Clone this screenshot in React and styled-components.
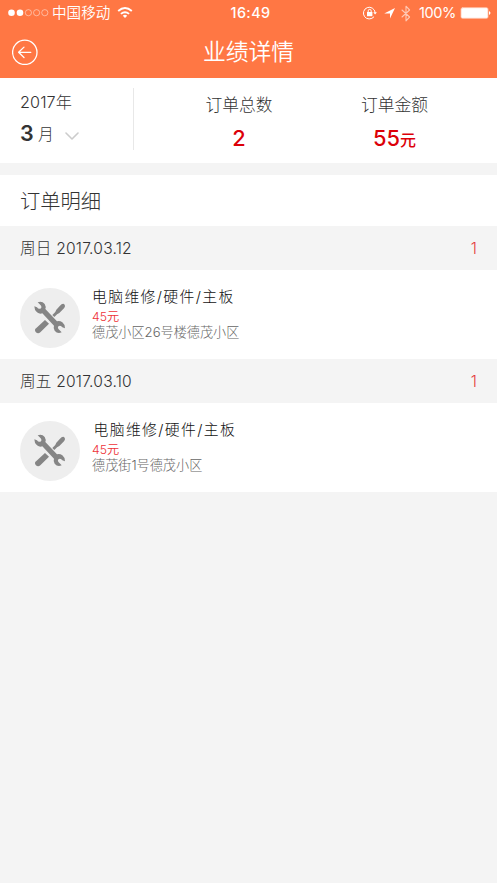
import React from 'react';
import styled, { createGlobalStyle } from 'styled-components';

const GlobalStyle = createGlobalStyle`
  * { box-sizing: border-box; }
  body {
    margin: 0;
    background: #f4f4f4;
    font-family: Inter, "Noto Sans CJK SC", sans-serif;
    font-weight: 300;
    color: #333;
  }
`;

const Screen = styled.main`
  width: 497px;
  min-height: 883px;
  background: #f4f4f4;
  overflow: hidden;
`;

const Header = styled.header`
  height: 78px;
  background: #ff7744;
  color: #fff;
`;

const StatusBar = styled.div`
  display: grid;
  grid-template-columns: 1fr auto 1fr;
  align-items: center;
  height: 26px;
  padding: 0 6px 0 8px;
`;

const StatusGroup = styled.div`
  display: flex;
  align-items: center;
  justify-content: ${(p) => (p.$end ? 'flex-end' : 'flex-start')};
`;

const Signal = styled.svg`
  display: block;
  margin-right: 3px;
`;

const Carrier = styled.span`
  font-size: 14.6px;
  line-height: 26px;
  font-weight: 350;
  margin-right: 7px;
`;

const Clock = styled.span`
  font-size: 14.4px;
  font-weight: 550;
  letter-spacing: 0.4px;
  line-height: 26px;
  margin-left: 2px;
`;

const Percent = styled.span`
  font-size: 14.6px;
  font-weight: 400;
  line-height: 26px;
  letter-spacing: -0.45px;
  margin: 0 4px 0 8px;
`;

const NavBar = styled.nav`
  display: grid;
  grid-template-columns: 60px 1fr 60px;
  height: 52px;
  align-items: center;
`;

const BackButton = styled.button`
  width: 26px;
  height: 26px;
  margin: 0 0 0 12px;
  padding: 0;
  border: 0;
  background: none;
  color: inherit;
`;

const PageTitle = styled.h1`
  margin: 0;
  font-size: 22.8px;
  font-weight: 350;
  line-height: 50px;
  text-align: center;
`;

const Icon = styled.svg`
  display: block;
  flex: none;
  fill: none;
  stroke: currentColor;
  stroke-linecap: round;
  stroke-linejoin: round;
`;

const Summary = styled.section`
  display: flex;
  height: 85px;
  padding-top: 10px;
  background: #fff;
`;

const Period = styled.div`
  width: 134px;
  height: 62px;
  padding-left: 20px;
  border-right: 1px solid #e8e8e8;
`;

const Year = styled.div`
  height: 29px;
  font-size: 16.2px;
  line-height: 28px;
  letter-spacing: 0.1px;
`;

const MonthRow = styled.div`
  display: flex;
  align-items: center;
  height: 34px;
  color: #333;
`;

const MonthNumber = styled.span`
  width: 18px;
  margin-top: -2px;
  font-size: 21.5px;
  font-weight: 600;
`;

const MonthUnit = styled.span`
  width: 27px;
  font-size: 15.8px;
  line-height: 30px;
  padding-top: 2px;
`;

const Chevron = styled(Icon)`
  margin-top: 3px;
  color: #ccc;
`;

const Stat = styled.div`
  width: ${(p) => p.$width}px;
  text-align: center;
`;

const StatLabel = styled.div`
  font-size: 16.8px;
  line-height: 34px;
`;

const StatValue = styled.div`
  font-size: 21.8px;
  line-height: 32px;
  font-weight: 550;
  color: #dc0008;
`;

const Unit = styled.span`
  font-size: 16px;
  font-weight: 500;
`;

const Orders = styled.section`
  margin-top: 12px;
`;

const OrdersTitle = styled.h2`
  height: 51px;
  margin: 0;
  padding: 1px 0 0 20px;
  background: #fff;
  font-size: 20.3px;
  font-weight: 300;
  line-height: 52px;
`;

const DayHeader = styled.div`
  display: flex;
  justify-content: space-between;
  height: 44px;
  padding: 0 20px;
  background: #f4f4f4;
  font-size: 15.6px;
  line-height: 45px;
  letter-spacing: 0.2px;
`;

const DayCount = styled.span`
  color: #e43a3c;
  letter-spacing: 0;
`;

const Order = styled.article`
  display: flex;
  height: 89px;
  padding: 15px 20px 0;
  background: #fff;
`;

const Avatar = styled.div`
  flex: none;
  width: 60px;
  height: 60px;
  margin: 3px 12px 0 0;
  border-radius: 50%;
  background: #eee;
`;

const OrderTitle = styled.h3`
  margin: 0;
  padding-left: ${(p) => p.$indent || 0}px;
  font-size: 14.8px;
  font-weight: 300;
  line-height: 24px;
  letter-spacing: 1.4px;
  color: #111;
`;

const Price = styled.div`
  font-size: 12.2px;
  line-height: 16px;
  font-weight: 350;
  color: #ee3338;
`;

const Address = styled.div`
  font-size: 13.15px;
  line-height: 15px;
  color: #666;
`;

const days = [
  { day: '周日', date: '2017.03.12', address: '德茂小区26号楼德茂小区', indent: 0 },
  { day: '周五', date: '2017.03.10', address: '德茂街1号德茂小区', indent: 1.5 },
];

function ToolsIcon() {
  return (
    <Icon width="60" height="60" viewBox="0 0 60 60" stroke="none">
      <g transform="translate(10 10) scale(.3333)" fill="#858585" stroke="none">
        <path d="M23 13Q36 8 44 18Q49 26 46 33L81 70Q89 67 97 73Q105 79 105 91L97 88Q93 82 87 84Q81 87 86 94L95 103Q82 108 74 98Q69 90 72 83L37 46Q29 49 21 43Q13 37 13 25L21 28Q25 34 31 32Q37 29 32 22Z" />
        <path d="M90 23Q96 16 102 18Q108 23 102 31L88 45Q82 47 73 57L67 51Q78 42 79 35Z" />
        <path d="M45 66 57 77 31 103Q24 109 17 102Q12 95 19 90Z" />
      </g>
    </Icon>
  );
}

export default function App() {
  return (
    <>
      <GlobalStyle />
      <Screen>
        <Header>
          <StatusBar>
            <StatusGroup>
              <Signal width="41" height="10" viewBox="0 0 41 10">
                <g fill="#fff">
                  <circle cx="3.5" cy="4.7" r="3.3" />
                  <circle cx="12" cy="4.7" r="3.3" />
                </g>
                <g fill="none" stroke="#fff" strokeOpacity=".65" strokeWidth=".7">
                  <circle cx="20.4" cy="4.7" r="3.1" />
                  <circle cx="28.6" cy="4.7" r="3.1" />
                  <circle cx="36.8" cy="4.7" r="3.1" />
                </g>
              </Signal>
              <Carrier>中国移动</Carrier>
              <Icon width="16" height="12" viewBox="0 0 16 12" strokeWidth="1.9">
                <path d="M1.2 4Q8-1.8 14.8 4M3.9 6.9Q8 3.4 12.1 6.9" strokeLinecap="butt" />
                <path d="M5.8 8.7Q8 7 10.2 8.7L8 11Z" fill="currentColor" stroke="none" />
              </Icon>
            </StatusGroup>
            <Clock>16:49</Clock>
            <StatusGroup $end>
              <Icon width="14" height="14" viewBox="0 0 14 14" strokeWidth="1">
                <path d="M10.8 11A5.9 5.9 0 1 1 12.2 6.4" />
                <path d="M10.3 6.2h3.6l-1.8 2.2Z" fill="currentColor" stroke="none" />
                <rect x="4" y="6" width="5.4" height="4.2" fill="currentColor" stroke="none" />
                <path d="M5.2 6V4.9a1.5 1.5 0 0 1 3 0V6" />
              </Icon>
              <Icon width="24" height="14" viewBox="0 0 24 14">
                <path d="M18 2 13 12.5V7.4H7.2Z" fill="currentColor" stroke="none" />
              </Icon>
              <Icon width="10" height="17" viewBox="0 0 10 17" strokeWidth="1.1" opacity=".6">
                <path d="M1 5 8.6 12 5 15.8V1.2L8.6 5 1 12" />
              </Icon>
              <Percent>100%</Percent>
              <Icon width="31" height="12" viewBox="0 0 31 12" stroke="none">
                <rect x="1" y=".7" width="27" height="10.6" rx="1.5" fill="#fff" stroke="#ffc5ae" strokeWidth=".8" />
                <path d="M29 4v4c2-1 2-3 0-4Z" fill="#fff" stroke="none" />
              </Icon>
            </StatusGroup>
          </StatusBar>
          <NavBar>
            <BackButton aria-label="返回">
              <Icon width="26" height="26" viewBox="0 0 26 26" strokeWidth="1.3">
                <circle cx="12.8" cy="13.3" r="12.2" />
                <path d="M18.8 13.3H6.8M12 8.1 6.6 13.3l5.4 5.2" />
              </Icon>
            </BackButton>
            <PageTitle>业绩详情</PageTitle>
          </NavBar>
        </Header>
        <Summary>
          <Period>
            <Year>2017年</Year>
            <MonthRow>
              <MonthNumber>3</MonthNumber>
              <MonthUnit>月</MonthUnit>
              <Chevron width="14" height="10" viewBox="0 0 14 10" strokeWidth="1.6">
                <path d="M1 2 7 8 13 2" />
              </Chevron>
            </MonthRow>
          </Period>
          <Stat $width={210}>
            <StatLabel>订单总数</StatLabel>
            <StatValue>2</StatValue>
          </Stat>
          <Stat $width={101}>
            <StatLabel>订单金额</StatLabel>
            <StatValue>55<Unit>元</Unit></StatValue>
          </Stat>
        </Summary>
        <Orders>
          <OrdersTitle>订单明细</OrdersTitle>
          {days.map((d) => (
            <React.Fragment key={d.date}>
              <DayHeader>
                <span>{d.day} {d.date}</span>
                <DayCount>1</DayCount>
              </DayHeader>
              <Order>
                <Avatar><ToolsIcon /></Avatar>
                <div>
                  <OrderTitle $indent={d.indent}>电脑维修/硬件/主板</OrderTitle>
                  <Price>45元</Price>
                  <Address>{d.address}</Address>
                </div>
              </Order>
            </React.Fragment>
          ))}
        </Orders>
      </Screen>
    </>
  );
}
